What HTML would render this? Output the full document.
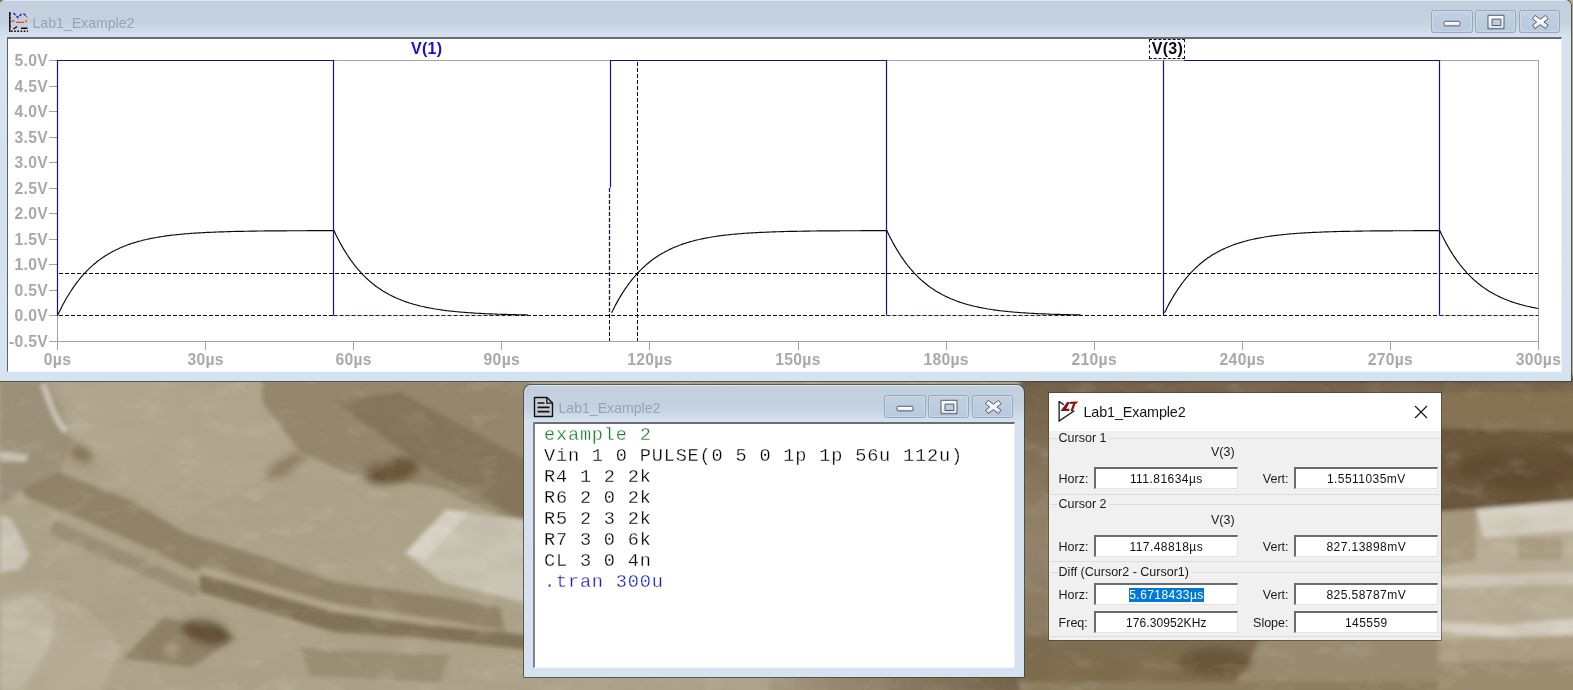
<!DOCTYPE html>
<html><head><meta charset="utf-8"><title>Lab1_Example2</title>
<style>
*{box-sizing:border-box;margin:0;padding:0}
html,body{width:1573px;height:690px;overflow:hidden}
body{position:relative;background:#b5a68a;font-family:"Liberation Sans",sans-serif}
.abs{position:absolute}
.bg{position:absolute;left:0;top:0;width:1573px;height:690px}
.win{position:absolute;border-radius:7px 7px 1px 1px;background:linear-gradient(#dde8f2 0,#dde8f2 1px,#c2cfdd 1.5px,#c4d1df 22px,#d6e2ee 37px,#d5e2ef 100%);box-shadow:0 0 0 1px rgba(60,62,66,.75)}
.win .title{position:absolute;font-size:14.6px;color:#9aa2ab;white-space:nowrap}
.win .content{position:absolute;background:#fff;border-top:2px solid #6e7378;border-left:1px solid #8b9096}
.cb{position:absolute;border:1px solid #96a8bd;border-radius:2.5px;background:linear-gradient(#c1d0e2,#b9cade);box-shadow:inset 0 0 0 1px rgba(255,255,255,.22)}
.cb svg{position:absolute;left:0;top:0}
.plot{position:absolute;left:0;top:0}
.yl{position:absolute;left:0;width:48px;text-align:right;font-weight:bold;letter-spacing:.3px;font-size:15.7px;line-height:20px;color:#a9a9a9;white-space:nowrap}
.xl{position:absolute;top:350px;width:80px;text-align:center;font-weight:bold;letter-spacing:.3px;font-size:15.7px;line-height:20px;color:#a9a9a9;white-space:nowrap}
.tl{position:absolute;font-weight:bold;letter-spacing:.25px;font-size:16px;line-height:20px;white-space:nowrap}
.net{position:absolute;left:544px;top:425.3px;font-family:"Liberation Mono",monospace;font-size:18.6px;letter-spacing:.81px;line-height:21px;color:#000;white-space:pre;-webkit-text-stroke:.3px #fff}
.dlg{position:absolute;left:1048px;top:392px;width:1393.5px;height:248px;background:#f0f0f0;box-shadow:0 0 0 1px rgba(70,60,45,.6)}
.dlg .tb{position:absolute;left:0;top:0;width:100%;height:38px;background:#fff}
.dlg .lbl{position:absolute;font-size:12.5px;line-height:18px;color:#1a1a1a;white-space:nowrap}
.dlg .inp{position:absolute;width:144px;height:22px;background:#fff;border:1px solid #e3e3e3;border-top:2px solid #6b6b6b;border-left:2px solid #6b6b6b;font-size:12px;letter-spacing:.45px;line-height:20.6px;text-align:center;color:#111;white-space:nowrap}
.dlg .gl{position:absolute;left:0;width:100%;height:1px;background:#dcdcdc}
.sel{background:#0078d7;color:#fff;padding:0;margin-right:-.45px}
</style></head><body>
<svg class="bg" width="1573" height="690" viewBox="0 0 1573 690"><defs><filter id="b2" x="-5%" y="-5%" width="110%" height="110%"><feGaussianBlur stdDeviation="2"/></filter><filter id="b5" x="-20%" y="-20%" width="140%" height="140%"><feGaussianBlur stdDeviation="4.5"/></filter><filter id="nz" x="0" y="0" width="100%" height="100%"><feTurbulence type="fractalNoise" baseFrequency="0.018 0.035" numOctaves="4" seed="7" result="t"/><feColorMatrix in="t" type="matrix" values="0 0 0 0 0.33  0 0 0 0 0.27  0 0 0 0 0.17  1.9 0 0 0 -0.78"/></filter><filter id="nw" x="0" y="0" width="100%" height="100%"><feTurbulence type="fractalNoise" baseFrequency="0.03 0.05" numOctaves="4" seed="23" result="t"/><feColorMatrix in="t" type="matrix" values="0 0 0 0 0.88  0 0 0 0 0.86  0 0 0 0 0.8  0 2.4 0 0 -1.32"/></filter><linearGradient id="gB" x1="0" y1="0" x2="1" y2="0"><stop offset="0" stop-color="#a5997f"/><stop offset=".45" stop-color="#8c7d62"/><stop offset="1" stop-color="#705f45"/></linearGradient><linearGradient id="gR" x1="0" y1="0" x2="0" y2="1"><stop offset="0" stop-color="#725f45"/><stop offset=".5" stop-color="#92836a"/><stop offset="1" stop-color="#82725a"/></linearGradient></defs><rect x="0" y="370" width="1573" height="320" fill="#ada38b"/><g filter="url(#b2)"><path d="M0 380H48L72 440L60 472L0 505Z" fill="#9c9079"/><path d="M60 380H300L290 465L180 520L120 482L75 440Z" fill="#b1a78f"/><path d="M262 380H530V530L440 488L350 474L300 452L262 402Z" fill="#94876d"/><path d="M334 402L400 392L530 462V524L430 470Z" fill="#84755b"/><path d="M405 553L446 510L530 520V604L442 582Z" fill="#c9c3b3"/><path d="M405 553L446 510L470 512L425 560Z" fill="#d8d3c6"/><path d="M23 489L58 472L130 500L186 533L260 556L334 582L450 598L500 608L505 632L450 621L334 604L260 588L197 572L139 544L70 514L23 496Z" fill="#918368"/><path d="M200 566L334 604L420 618L530 635V640L420 625L334 612L200 574Z" fill="#b0a58c"/><path d="M200 574L334 612L420 624L530 635V650L420 638L334 632L200 592Z" fill="#827256"/><path d="M55 520L200 585L196 598L50 534Z" fill="#9b8f77"/><path d="M164 617L237 637L192 667L123 658Z" fill="#8f8167"/><path d="M0 515L12 520L30 555L20 570L0 572Z" fill="#cec9bb"/><path d="M0 596L40 590L90 610L120 650L100 694H0Z" fill="#b7ad97"/><path d="M0 604L30 596L56 612L48 650L22 690H0Z" fill="#c2baa6"/><path d="M0 452L28 455L26 462L0 461Z" fill="#c9c4b5"/><path d="M300 648L450 655L440 682L310 676Z" fill="#9b8f76"/><path d="M43 384C50 400 52 415 66 432" stroke="#cdc8ba" stroke-width="5.5" fill="none"/></g><g filter="url(#b5)"><ellipse cx="392" cy="471" rx="27" ry="12" transform="rotate(-12 392 471)" fill="#665539"/><ellipse cx="286" cy="466" rx="22" ry="8" transform="rotate(-30 286 466)" fill="#8d7f65"/><ellipse cx="81" cy="454" rx="12" ry="8" transform="rotate(30 81 454)" fill="#857657"/><ellipse cx="206" cy="632" rx="24" ry="11" transform="rotate(12 206 632)" fill="#5d4c33"/><circle cx="172" cy="651" r="7" fill="#a99e85"/></g><g filter="url(#b2)"><rect x="1020" y="376" width="560" height="142" fill="#69553b"/><rect x="1020" y="384" width="30" height="310" fill="url(#gR)"/><rect x="770" y="672" width="262" height="22" fill="url(#gB)"/><path d="M1040 382H1580V396L1040 393Z" fill="#75644a"/><path d="M1438 392H1580V432L1438 428Z" fill="#857253"/><path d="M1020 636H1580V694H1020Z" fill="#7e6c50"/><path d="M1262 636H1580V694H1230Z" fill="#9a8b70"/><path d="M1020 682H1580V694H1020Z" fill="#8d7d60"/><path d="M1438 512L1580 501V664L1438 660Z" fill="#b9ae97"/><path d="M1438 512L1476 509L1476 560L1438 566Z" fill="#a6997f"/><path d="M1476 509L1580 500V530L1484 538Z" fill="#d6d1c3"/><path d="M1518 538H1562V560H1518Z" fill="#aa9e85"/><path d="M1438 576L1580 572V584L1438 587Z" fill="#d0cabb"/><path d="M1438 622L1500 625L1580 618V634L1500 637L1438 631Z" fill="#d5d0c2"/><path d="M1438 640L1580 636V664L1438 662Z" fill="#ab9e84"/><path d="M1438 662L1580 660V694H1438Z" fill="#9c8d71"/></g><g filter="url(#b5)"><ellipse cx="1215" cy="662" rx="36" ry="14" fill="#67563b"/><ellipse cx="1520" cy="470" rx="60" ry="22" fill="#604c31"/></g><rect x="0" y="380" width="1573" height="310" filter="url(#nz)" opacity=".2"/><rect x="0" y="380" width="1573" height="310" filter="url(#nw)" opacity=".16"/></svg>
<!-- main plot window -->
<div class="win" style="left:-1px;top:0;width:1572px;height:381px;border-radius:6px 6px 0 0"></div>
<div class="abs" style="left:7px;top:37px;width:1555px;height:334.5px;background:#fff;border-top:2px solid #696e74;border-left:1px solid #5d6268;border-right:1px solid #e8eef5;border-bottom:1px solid #f2f6fa"></div>
<svg class="abs" style="left:8px;top:11px" width="22" height="22" viewBox="0 0 22 22">
<rect x="2" y="1" width="18" height="20" fill="#c9cdd6" opacity=".75"/>
<path d="M1.8 1v20" stroke="#0a0a0a" stroke-width="1.4"/>
<path d="M1 3h2M1 7h2M1 11h2M1 15h2" stroke="#0a0a0a" stroke-width="1"/>
<path d="M3 20.3h17" stroke="#0a0a0a" stroke-width="1.4" stroke-dasharray="1.6 1.6"/>
<path d="M5.5 2l4.5 4.5 3.5-3.5M15.5 2.5l3.5 3.5" stroke="#1a1ab8" stroke-width="1.3" fill="none" stroke-dasharray="3 1.2"/>
<path d="M3.5 10h3M8 11.3h8M17 11l2-1.5" stroke="#e04a3a" stroke-width="1.3" fill="none"/>
<path d="M5.5 18l3.5-2.5M13 17.3h6.5" stroke="#0a0a30" stroke-width="1.5" fill="none"/>
</svg>
<div class="abs" style="left:32.5px;top:13px;font-size:14.1px;line-height:20px;color:#9ba3ac;white-space:nowrap" id="t1">Lab1_Example2</div>
<div class="cb" style="left:1431.4px;top:10.2px;width:41.2px;height:23.2px"><svg width="41.2" height="23.2" viewBox="0 0 41.2 23.2"><defs><linearGradient id="gg" x1="0" y1="0" x2="0" y2="1"><stop offset="0" stop-color="#fff"/><stop offset=".5" stop-color="#f6f7f9"/><stop offset="1" stop-color="#d9dde5"/></linearGradient></defs><rect x="12" y="10.3" width="16" height="4.6" rx="1" fill="url(#gg)" stroke="#525c6a" stroke-width="1"/></svg></div><div class="cb" style="left:1475.3px;top:10.2px;width:41.2px;height:23.2px"><svg width="41.2" height="23.2" viewBox="0 0 41.2 23.2"><defs><linearGradient id="gg" x1="0" y1="0" x2="0" y2="1"><stop offset="0" stop-color="#fff"/><stop offset=".5" stop-color="#f6f7f9"/><stop offset="1" stop-color="#d9dde5"/></linearGradient></defs><path d="M12 4.3h16v13.5h-16z M16 8.1v6.4h8.9v-6.4z" fill="url(#gg)" fill-rule="evenodd" stroke="#525c6a" stroke-width="1" stroke-linejoin="round"/></svg></div><div class="cb" style="left:1519.2px;top:10.2px;width:41.2px;height:23.2px"><svg width="41.2" height="23.2" viewBox="0 0 41.2 23.2"><defs><linearGradient id="gg" x1="0" y1="0" x2="0" y2="1"><stop offset="0" stop-color="#fff"/><stop offset=".5" stop-color="#f6f7f9"/><stop offset="1" stop-color="#d9dde5"/></linearGradient></defs><polygon points="12.45,7.85 15.08,4.35 20.30,8.27 25.52,4.35 28.15,7.85 23.94,11.00 28.15,14.15 25.52,17.65 20.30,13.73 15.08,17.65 12.45,14.15 16.66,11.00" fill="url(#gg)" stroke="#525c6a" stroke-width="1" stroke-linejoin="round"/></svg></div>
<div class="yl" style="top:332px">-0.5V</div><div class="yl" style="top:306px">0.0V</div><div class="yl" style="top:281px">0.5V</div><div class="yl" style="top:255px">1.0V</div><div class="yl" style="top:230px">1.5V</div><div class="yl" style="top:204px">2.0V</div><div class="yl" style="top:179px">2.5V</div><div class="yl" style="top:153px">3.0V</div><div class="yl" style="top:128px">3.5V</div><div class="yl" style="top:102px">4.0V</div><div class="yl" style="top:77px">4.5V</div><div class="yl" style="top:51px">5.0V</div>
<div class="xl" style="left:17.5px">0µs</div><div class="xl" style="left:165.6px">30µs</div><div class="xl" style="left:313.7px">60µs</div><div class="xl" style="left:461.8px">90µs</div><div class="xl" style="left:609.9px">120µs</div><div class="xl" style="left:758.0px">150µs</div><div class="xl" style="left:906.1px">180µs</div><div class="xl" style="left:1054.2px">210µs</div><div class="xl" style="left:1202.3px">240µs</div><div class="xl" style="left:1350.4px">270µs</div><div class="xl" style="left:1498.5px">300µs</div>
<div class="tl" style="left:411px;top:39.1px;color:#1a10cc">V(1)</div>
<div class="tl" style="left:1151.8px;top:39.1px;color:#0c0c14">V(3)</div>
<div class="abs" style="left:1149px;top:38.5px;width:36px;height:20px;border:1.3px dashed #111"></div>
<svg class="plot" width="1573" height="690" viewBox="0 0 1573 690"><g stroke="#a3a3a3" stroke-width="1" fill="none" shape-rendering="crispEdges"><path d="M57.5 60.5H1538.5V341.5H49M57.5 60.5V349.5"/><path d="M205.6 341.5V349.5"/><path d="M353.7 341.5V349.5"/><path d="M501.8 341.5V349.5"/><path d="M649.9 341.5V349.5"/><path d="M798.0 341.5V349.5"/><path d="M946.1 341.5V349.5"/><path d="M1094.2 341.5V349.5"/><path d="M1242.3 341.5V349.5"/><path d="M1390.4 341.5V349.5"/><path d="M1538.5 341.5V349.5"/><path d="M49 315.5H57.5"/><path d="M49 290.0H57.5"/><path d="M49 264.5H57.5"/><path d="M49 239.0H57.5"/><path d="M49 213.5H57.5"/><path d="M49 188.0H57.5"/><path d="M49 162.5H57.5"/><path d="M49 137.0H57.5"/><path d="M49 111.5H57.5"/><path d="M49 86.0H57.5"/><path d="M49 60.5H57.5"/></g><g stroke="#0c0c0c" stroke-width="1" fill="none" stroke-dasharray="4 2"><path d="M59 273.5H1538"/><path d="M59 315.5H1538"/><path d="M609.5 188V341"/><path d="M637.5 62V341"/></g><g stroke="#12128f" stroke-width="1.2" fill="none"><path d="M57.5 315.5V60.5H333.5V315.5"/><path d="M610.5 187.5V60.5H886.5V315.5"/><path d="M1163.5 315.5V60.5M1184 60.5H1439.5V315.5"/></g><path d="M333.5 315.5H514.1" stroke="#f4f49a" stroke-width="1.3"/><path d="M333.5 315.5H514.1" stroke="#12128f" stroke-width="1.2" stroke-dasharray="4 2"/><path d="M886.5 315.5H1067.0" stroke="#f4f49a" stroke-width="1.3"/><path d="M886.5 315.5H1067.0" stroke="#12128f" stroke-width="1.2" stroke-dasharray="4 2"/><path d="M1439.5 315.5H1538.5" stroke="#f4f49a" stroke-width="1.3"/><path d="M1439.5 315.5H1538.5" stroke="#12128f" stroke-width="1.2" stroke-dasharray="4 2"/><path d="M609.5 188V315" stroke="#f4f49a" stroke-width="1.3"/><path d="M609.5 188V315" stroke="#15156a" stroke-width="1.3" stroke-dasharray="4 2"/><path d="M57.5 315.5L58.7 312.9L60.0 310.4L61.2 307.9L62.4 305.5L63.7 303.2L64.9 301.0L66.1 298.8L67.4 296.7L68.6 294.7L69.8 292.7L71.1 290.8L72.3 288.9L73.5 287.1L74.8 285.4L76.0 283.7L77.2 282.1L78.5 280.5L79.7 278.9L80.9 277.4L82.2 276.0L83.4 274.6L84.7 273.2L85.9 271.9L87.1 270.7L88.4 269.4L89.6 268.2L90.8 267.1L92.1 265.9L93.3 264.8L94.5 263.8L95.8 262.8L97.0 261.8L98.2 260.8L99.5 259.9L100.7 259.0L101.9 258.1L103.2 257.2L104.4 256.4L105.6 255.6L106.9 254.9L108.1 254.1L109.3 253.4L110.6 252.7L111.8 252.0L113.0 251.3L114.3 250.7L115.5 250.1L116.7 249.5L118.0 248.9L119.2 248.3L120.4 247.8L121.7 247.2L122.9 246.7L124.1 246.2L125.4 245.7L126.6 245.3L127.8 244.8L129.1 244.4L130.3 243.9L131.6 243.5L132.8 243.1L134.0 242.7L135.3 242.4L136.5 242.0L137.7 241.6L139.0 241.3L140.2 241.0L141.4 240.7L142.7 240.3L143.9 240.0L145.1 239.7L146.4 239.5L147.6 239.2L148.8 238.9L150.1 238.7L151.3 238.4L152.5 238.2L153.8 237.9L155.0 237.7L156.2 237.5L157.5 237.3L158.7 237.1L159.9 236.9L161.2 236.7L162.4 236.5L163.6 236.3L164.9 236.1L166.1 235.9L167.3 235.8L168.6 235.6L169.8 235.4L171.0 235.3L172.3 235.1L173.5 235.0L174.7 234.9L176.0 234.7L177.2 234.6L178.4 234.5L179.7 234.4L180.9 234.2L182.2 234.1L183.4 234.0L184.6 233.9L185.9 233.8L187.1 233.7L188.3 233.6L189.6 233.5L190.8 233.4L192.0 233.3L193.3 233.2L194.5 233.1L195.7 233.1L197.0 233.0L198.2 232.9L199.4 232.8L200.7 232.8L201.9 232.7L203.1 232.6L204.4 232.6L205.6 232.5L206.8 232.4L208.1 232.4L209.3 232.3L210.5 232.3L211.8 232.2L213.0 232.2L214.2 232.1L215.5 232.1L216.7 232.0L217.9 232.0L219.2 231.9L220.4 231.9L221.6 231.8L222.9 231.8L224.1 231.8L225.3 231.7L226.6 231.7L227.8 231.6L229.0 231.6L230.3 231.6L231.5 231.5L232.8 231.5L234.0 231.5L235.2 231.4L236.5 231.4L237.7 231.4L238.9 231.4L240.2 231.3L241.4 231.3L242.6 231.3L243.9 231.3L245.1 231.2L246.3 231.2L247.6 231.2L248.8 231.2L250.0 231.1L251.3 231.1L252.5 231.1L253.7 231.1L255.0 231.1L256.2 231.1L257.4 231.0L258.7 231.0L259.9 231.0L261.1 231.0L262.4 231.0L263.6 231.0L264.8 230.9L266.1 230.9L267.3 230.9L268.5 230.9L269.8 230.9L271.0 230.9L272.2 230.9L273.5 230.9L274.7 230.8L275.9 230.8L277.2 230.8L278.4 230.8L279.6 230.8L280.9 230.8L282.1 230.8L283.4 230.8L284.6 230.8L285.8 230.8L287.1 230.8L288.3 230.7L289.5 230.7L290.8 230.7L292.0 230.7L293.2 230.7L294.5 230.7L295.7 230.7L296.9 230.7L298.2 230.7L299.4 230.7L300.6 230.7L301.9 230.7L303.1 230.7L304.3 230.7L305.6 230.7L306.8 230.7L308.0 230.6L309.3 230.6L310.5 230.6L311.7 230.6L313.0 230.6L314.2 230.6L315.4 230.6L316.7 230.6L317.9 230.6L319.1 230.6L320.4 230.6L321.6 230.6L322.8 230.6L324.1 230.6L325.3 230.6L326.5 230.6L327.8 230.6L329.0 230.6L330.3 230.6L331.5 230.6L332.7 230.6L334.0 230.6L335.2 233.2L336.4 235.7L337.7 238.2L338.9 240.6L340.1 242.9L341.4 245.1L342.6 247.3L343.8 249.4L345.1 251.4L346.3 253.4L347.5 255.3L348.8 257.1L350.0 258.9L351.2 260.7L352.5 262.4L353.7 264.0L354.9 265.6L356.2 267.1L357.4 268.6L358.6 270.0L359.9 271.4L361.1 272.8L362.3 274.1L363.6 275.4L364.8 276.6L366.0 277.8L367.3 279.0L368.5 280.1L369.7 281.2L371.0 282.2L372.2 283.3L373.4 284.3L374.7 285.2L375.9 286.2L377.1 287.1L378.4 287.9L379.6 288.8L380.9 289.6L382.1 290.4L383.3 291.2L384.6 291.9L385.8 292.6L387.0 293.3L388.3 294.0L389.5 294.7L390.7 295.3L392.0 295.9L393.2 296.6L394.4 297.1L395.7 297.7L396.9 298.2L398.1 298.8L399.4 299.3L400.6 299.8L401.8 300.3L403.1 300.7L404.3 301.2L405.5 301.6L406.8 302.1L408.0 302.5L409.2 302.9L410.5 303.3L411.7 303.6L412.9 304.0L414.2 304.4L415.4 304.7L416.6 305.0L417.9 305.4L419.1 305.7L420.3 306.0L421.6 306.3L422.8 306.5L424.0 306.8L425.3 307.1L426.5 307.4L427.8 307.6L429.0 307.8L430.2 308.1L431.5 308.3L432.7 308.5L433.9 308.7L435.2 309.0L436.4 309.2L437.6 309.3L438.9 309.5L440.1 309.7L441.3 309.9L442.6 310.1L443.8 310.2L445.0 310.4L446.3 310.6L447.5 310.7L448.7 310.9L450.0 311.0L451.2 311.1L452.4 311.3L453.7 311.4L454.9 311.5L456.1 311.7L457.4 311.8L458.6 311.9L459.8 312.0L461.1 312.1L462.3 312.2L463.5 312.3L464.8 312.4L466.0 312.5L467.2 312.6L468.5 312.7L469.7 312.8L470.9 312.9L472.2 312.9L473.4 313.0L474.6 313.1L475.9 313.2L477.1 313.2L478.4 313.3L479.6 313.4L480.8 313.4L482.1 313.5L483.3 313.6L484.5 313.6L485.8 313.7L487.0 313.7L488.2 313.8L489.5 313.8L490.7 313.9L491.9 313.9L493.2 314.0L494.4 314.0L495.6 314.1L496.9 314.1L498.1 314.2L499.3 314.2L500.6 314.3L501.8 314.3L503.0 314.3L504.3 314.4L505.5 314.4L506.7 314.4L508.0 314.5L509.2 314.5L510.4 314.5L511.7 314.6L512.9 314.6L514.1 314.6L515.4 314.6L516.6 314.7L517.8 314.7L519.1 314.7L520.3 314.7L521.5 314.8L522.8 314.8L524.0 314.8L525.2 314.8L526.5 314.9L527.7 314.9M611.6 312.8L612.9 310.3L614.1 307.8L615.3 305.4L616.6 303.1L617.8 300.9L619.0 298.7L620.3 296.6L621.5 294.6L622.7 292.6L624.0 290.7L625.2 288.9L626.5 287.1L627.7 285.3L628.9 283.6L630.2 282.0L631.4 280.4L632.6 278.9L633.9 277.4L635.1 276.0L636.3 274.6L637.6 273.2L638.8 271.9L640.0 270.6L641.3 269.4L642.5 268.2L643.7 267.0L645.0 265.9L646.2 264.8L647.4 263.8L648.7 262.7L649.9 261.7L651.1 260.8L652.4 259.8L653.6 258.9L654.8 258.1L656.1 257.2L657.3 256.4L658.5 255.6L659.8 254.8L661.0 254.1L662.2 253.4L663.5 252.7L664.7 252.0L665.9 251.3L667.2 250.7L668.4 250.1L669.6 249.4L670.9 248.9L672.1 248.3L673.3 247.8L674.6 247.2L675.8 246.7L677.1 246.2L678.3 245.7L679.5 245.3L680.8 244.8L682.0 244.4L683.2 243.9L684.5 243.5L685.7 243.1L686.9 242.7L688.2 242.4L689.4 242.0L690.6 241.6L691.9 241.3L693.1 241.0L694.3 240.6L695.6 240.3L696.8 240.0L698.0 239.7L699.3 239.5L700.5 239.2L701.7 238.9L703.0 238.6L704.2 238.4L705.4 238.2L706.7 237.9L707.9 237.7L709.1 237.5L710.4 237.3L711.6 237.0L712.8 236.8L714.1 236.7L715.3 236.5L716.5 236.3L717.8 236.1L719.0 235.9L720.2 235.8L721.5 235.6L722.7 235.4L723.9 235.3L725.2 235.1L726.4 235.0L727.7 234.9L728.9 234.7L730.1 234.6L731.4 234.5L732.6 234.3L733.8 234.2L735.1 234.1L736.3 234.0L737.5 233.9L738.8 233.8L740.0 233.7L741.2 233.6L742.5 233.5L743.7 233.4L744.9 233.3L746.2 233.2L747.4 233.1L748.6 233.1L749.9 233.0L751.1 232.9L752.3 232.8L753.6 232.8L754.8 232.7L756.0 232.6L757.3 232.6L758.5 232.5L759.7 232.4L761.0 232.4L762.2 232.3L763.4 232.3L764.7 232.2L765.9 232.2L767.1 232.1L768.4 232.1L769.6 232.0L770.8 232.0L772.1 231.9L773.3 231.9L774.6 231.8L775.8 231.8L777.0 231.7L778.3 231.7L779.5 231.7L780.7 231.6L782.0 231.6L783.2 231.6L784.4 231.5L785.7 231.5L786.9 231.5L788.1 231.4L789.4 231.4L790.6 231.4L791.8 231.4L793.1 231.3L794.3 231.3L795.5 231.3L796.8 231.3L798.0 231.2L799.2 231.2L800.5 231.2L801.7 231.2L802.9 231.1L804.2 231.1L805.4 231.1L806.6 231.1L807.9 231.1L809.1 231.1L810.3 231.0L811.6 231.0L812.8 231.0L814.0 231.0L815.3 231.0L816.5 231.0L817.7 230.9L819.0 230.9L820.2 230.9L821.4 230.9L822.7 230.9L823.9 230.9L825.2 230.9L826.4 230.9L827.6 230.8L828.9 230.8L830.1 230.8L831.3 230.8L832.6 230.8L833.8 230.8L835.0 230.8L836.3 230.8L837.5 230.8L838.7 230.8L840.0 230.8L841.2 230.7L842.4 230.7L843.7 230.7L844.9 230.7L846.1 230.7L847.4 230.7L848.6 230.7L849.8 230.7L851.1 230.7L852.3 230.7L853.5 230.7L854.8 230.7L856.0 230.7L857.2 230.7L858.5 230.7L859.7 230.7L860.9 230.6L862.2 230.6L863.4 230.6L864.6 230.6L865.9 230.6L867.1 230.6L868.3 230.6L869.6 230.6L870.8 230.6L872.0 230.6L873.3 230.6L874.5 230.6L875.8 230.6L877.0 230.6L878.2 230.6L879.5 230.6L880.7 230.6L881.9 230.6L883.2 230.6L884.4 230.6L885.6 230.6L886.9 230.6L888.1 233.2L889.3 235.7L890.6 238.2L891.8 240.6L893.0 242.9L894.3 245.1L895.5 247.3L896.7 249.4L898.0 251.4L899.2 253.4L900.4 255.3L901.7 257.1L902.9 258.9L904.1 260.7L905.4 262.4L906.6 264.0L907.8 265.6L909.1 267.1L910.3 268.6L911.5 270.0L912.8 271.4L914.0 272.8L915.2 274.1L916.5 275.4L917.7 276.6L918.9 277.8L920.2 279.0L921.4 280.1L922.7 281.2L923.9 282.2L925.1 283.3L926.4 284.3L927.6 285.2L928.8 286.2L930.1 287.1L931.3 287.9L932.5 288.8L933.8 289.6L935.0 290.4L936.2 291.2L937.5 291.9L938.7 292.6L939.9 293.3L941.2 294.0L942.4 294.7L943.6 295.3L944.9 295.9L946.1 296.6L947.3 297.1L948.6 297.7L949.8 298.2L951.0 298.8L952.3 299.3L953.5 299.8L954.7 300.3L956.0 300.7L957.2 301.2L958.4 301.6L959.7 302.1L960.9 302.5L962.1 302.9L963.4 303.3L964.6 303.6L965.8 304.0L967.1 304.4L968.3 304.7L969.5 305.0L970.8 305.4L972.0 305.7L973.3 306.0L974.5 306.3L975.7 306.5L977.0 306.8L978.2 307.1L979.4 307.4L980.7 307.6L981.9 307.8L983.1 308.1L984.4 308.3L985.6 308.5L986.8 308.7L988.1 309.0L989.3 309.2L990.5 309.3L991.8 309.5L993.0 309.7L994.2 309.9L995.5 310.1L996.7 310.2L997.9 310.4L999.2 310.6L1000.4 310.7L1001.6 310.9L1002.9 311.0L1004.1 311.1L1005.3 311.3L1006.6 311.4L1007.8 311.5L1009.0 311.7L1010.3 311.8L1011.5 311.9L1012.7 312.0L1014.0 312.1L1015.2 312.2L1016.4 312.3L1017.7 312.4L1018.9 312.5L1020.1 312.6L1021.4 312.7L1022.6 312.8L1023.9 312.9L1025.1 312.9L1026.3 313.0L1027.6 313.1L1028.8 313.2L1030.0 313.2L1031.3 313.3L1032.5 313.4L1033.7 313.4L1035.0 313.5L1036.2 313.6L1037.4 313.6L1038.7 313.7L1039.9 313.7L1041.1 313.8L1042.4 313.8L1043.6 313.9L1044.8 313.9L1046.1 314.0L1047.3 314.0L1048.5 314.1L1049.8 314.1L1051.0 314.2L1052.2 314.2L1053.5 314.3L1054.7 314.3L1055.9 314.3L1057.2 314.4L1058.4 314.4L1059.6 314.4L1060.9 314.5L1062.1 314.5L1063.3 314.5L1064.6 314.6L1065.8 314.6L1067.0 314.6L1068.3 314.6L1069.5 314.7L1070.8 314.7L1072.0 314.7L1073.2 314.7L1074.5 314.8L1075.7 314.8L1076.9 314.8L1078.2 314.8L1079.4 314.9L1080.6 314.9M1164.5 312.8L1165.8 310.3L1167.0 307.8L1168.2 305.4L1169.5 303.1L1170.7 300.9L1172.0 298.7L1173.2 296.6L1174.4 294.6L1175.7 292.6L1176.9 290.7L1178.1 288.9L1179.4 287.1L1180.6 285.3L1181.8 283.6L1183.1 282.0L1184.3 280.4L1185.5 278.9L1186.8 277.4L1188.0 276.0L1189.2 274.6L1190.5 273.2L1191.7 271.9L1192.9 270.6L1194.2 269.4L1195.4 268.2L1196.6 267.0L1197.9 265.9L1199.1 264.8L1200.3 263.8L1201.6 262.7L1202.8 261.7L1204.0 260.8L1205.3 259.8L1206.5 258.9L1207.7 258.1L1209.0 257.2L1210.2 256.4L1211.4 255.6L1212.7 254.8L1213.9 254.1L1215.1 253.4L1216.4 252.7L1217.6 252.0L1218.9 251.3L1220.1 250.7L1221.3 250.1L1222.6 249.4L1223.8 248.9L1225.0 248.3L1226.3 247.8L1227.5 247.2L1228.7 246.7L1230.0 246.2L1231.2 245.7L1232.4 245.3L1233.7 244.8L1234.9 244.4L1236.1 243.9L1237.4 243.5L1238.6 243.1L1239.8 242.7L1241.1 242.4L1242.3 242.0L1243.5 241.6L1244.8 241.3L1246.0 241.0L1247.2 240.6L1248.5 240.3L1249.7 240.0L1250.9 239.7L1252.2 239.5L1253.4 239.2L1254.6 238.9L1255.9 238.6L1257.1 238.4L1258.3 238.2L1259.6 237.9L1260.8 237.7L1262.0 237.5L1263.3 237.3L1264.5 237.0L1265.7 236.8L1267.0 236.7L1268.2 236.5L1269.5 236.3L1270.7 236.1L1271.9 235.9L1273.2 235.8L1274.4 235.6L1275.6 235.4L1276.9 235.3L1278.1 235.1L1279.3 235.0L1280.6 234.9L1281.8 234.7L1283.0 234.6L1284.3 234.5L1285.5 234.3L1286.7 234.2L1288.0 234.1L1289.2 234.0L1290.4 233.9L1291.7 233.8L1292.9 233.7L1294.1 233.6L1295.4 233.5L1296.6 233.4L1297.8 233.3L1299.1 233.2L1300.3 233.1L1301.5 233.1L1302.8 233.0L1304.0 232.9L1305.2 232.8L1306.5 232.8L1307.7 232.7L1308.9 232.6L1310.2 232.6L1311.4 232.5L1312.6 232.4L1313.9 232.4L1315.1 232.3L1316.3 232.3L1317.6 232.2L1318.8 232.2L1320.1 232.1L1321.3 232.1L1322.5 232.0L1323.8 232.0L1325.0 231.9L1326.2 231.9L1327.5 231.8L1328.7 231.8L1329.9 231.7L1331.2 231.7L1332.4 231.7L1333.6 231.6L1334.9 231.6L1336.1 231.6L1337.3 231.5L1338.6 231.5L1339.8 231.5L1341.0 231.4L1342.3 231.4L1343.5 231.4L1344.7 231.4L1346.0 231.3L1347.2 231.3L1348.4 231.3L1349.7 231.3L1350.9 231.2L1352.1 231.2L1353.4 231.2L1354.6 231.2L1355.8 231.1L1357.1 231.1L1358.3 231.1L1359.5 231.1L1360.8 231.1L1362.0 231.1L1363.2 231.0L1364.5 231.0L1365.7 231.0L1367.0 231.0L1368.2 231.0L1369.4 231.0L1370.7 230.9L1371.9 230.9L1373.1 230.9L1374.4 230.9L1375.6 230.9L1376.8 230.9L1378.1 230.9L1379.3 230.9L1380.5 230.8L1381.8 230.8L1383.0 230.8L1384.2 230.8L1385.5 230.8L1386.7 230.8L1387.9 230.8L1389.2 230.8L1390.4 230.8L1391.6 230.8L1392.9 230.8L1394.1 230.7L1395.3 230.7L1396.6 230.7L1397.8 230.7L1399.0 230.7L1400.3 230.7L1401.5 230.7L1402.7 230.7L1404.0 230.7L1405.2 230.7L1406.4 230.7L1407.7 230.7L1408.9 230.7L1410.1 230.7L1411.4 230.7L1412.6 230.7L1413.8 230.6L1415.1 230.6L1416.3 230.6L1417.6 230.6L1418.8 230.6L1420.0 230.6L1421.3 230.6L1422.5 230.6L1423.7 230.6L1425.0 230.6L1426.2 230.6L1427.4 230.6L1428.7 230.6L1429.9 230.6L1431.1 230.6L1432.4 230.6L1433.6 230.6L1434.8 230.6L1436.1 230.6L1437.3 230.6L1438.5 230.6L1439.8 230.6L1441.0 233.2L1442.2 235.7L1443.5 238.2L1444.7 240.6L1445.9 242.9L1447.2 245.1L1448.4 247.3L1449.6 249.4L1450.9 251.4L1452.1 253.4L1453.3 255.3L1454.6 257.1L1455.8 258.9L1457.0 260.7L1458.3 262.4L1459.5 264.0L1460.7 265.6L1462.0 267.1L1463.2 268.6L1464.5 270.0L1465.7 271.4L1466.9 272.8L1468.2 274.1L1469.4 275.4L1470.6 276.6L1471.9 277.8L1473.1 279.0L1474.3 280.1L1475.6 281.2L1476.8 282.2L1478.0 283.3L1479.3 284.3L1480.5 285.2L1481.7 286.2L1483.0 287.1L1484.2 287.9L1485.4 288.8L1486.7 289.6L1487.9 290.4L1489.1 291.2L1490.4 291.9L1491.6 292.6L1492.8 293.3L1494.1 294.0L1495.3 294.7L1496.5 295.3L1497.8 295.9L1499.0 296.6L1500.2 297.1L1501.5 297.7L1502.7 298.2L1503.9 298.8L1505.2 299.3L1506.4 299.8L1507.6 300.3L1508.9 300.7L1510.1 301.2L1511.3 301.6L1512.6 302.1L1513.8 302.5L1515.1 302.9L1516.3 303.3L1517.5 303.6L1518.8 304.0L1520.0 304.4L1521.2 304.7L1522.5 305.0L1523.7 305.4L1524.9 305.7L1526.2 306.0L1527.4 306.3L1528.6 306.5L1529.9 306.8L1531.1 307.1L1532.3 307.4L1533.6 307.6L1534.8 307.8L1536.0 308.1L1537.3 308.3L1538.5 308.5" stroke="#0a0a0a" stroke-width="1.15" fill="none" stroke-linejoin="round"/></svg>
<!-- netlist window -->
<div class="win" style="left:524px;top:384.5px;width:499.5px;height:292.5px"></div>
<div class="abs" style="left:532.5px;top:421.5px;width:482.5px;height:246px;background:#fff;border-top:2px solid #6a6f75;border-left:2px solid #7d838a;border-right:1px solid #e8eef5;border-bottom:1px solid #f2f6fa"></div>
<svg class="abs" style="left:533px;top:396px" width="22" height="22" viewBox="0 0 22 22">
<path d="M1.5 1.5h12.5l5.5 5.5v13.5h-18z" fill="#c8ccd2" stroke="#111" stroke-width="1.4" stroke-linejoin="round"/>
<path d="M13.8 1.5v5.7h5.7" fill="none" stroke="#111" stroke-width="1.3"/>
<path d="M4.5 7h7M4.5 11.3h12M4.5 15.6h12" stroke="#111" stroke-width="1.7"/>
</svg>
<div class="abs" style="left:558.5px;top:397.9px;font-size:14.1px;line-height:20px;color:#9ba3ac;white-space:nowrap" id="t2">Lab1_Example2</div>
<div class="cb" style="left:884.4px;top:395.2px;width:41.2px;height:23.2px"><svg width="41.2" height="23.2" viewBox="0 0 41.2 23.2"><defs><linearGradient id="gg" x1="0" y1="0" x2="0" y2="1"><stop offset="0" stop-color="#fff"/><stop offset=".5" stop-color="#f6f7f9"/><stop offset="1" stop-color="#d9dde5"/></linearGradient></defs><rect x="12" y="10.3" width="16" height="4.6" rx="1" fill="url(#gg)" stroke="#525c6a" stroke-width="1"/></svg></div><div class="cb" style="left:928.3px;top:395.2px;width:41.2px;height:23.2px"><svg width="41.2" height="23.2" viewBox="0 0 41.2 23.2"><defs><linearGradient id="gg" x1="0" y1="0" x2="0" y2="1"><stop offset="0" stop-color="#fff"/><stop offset=".5" stop-color="#f6f7f9"/><stop offset="1" stop-color="#d9dde5"/></linearGradient></defs><path d="M12 4.3h16v13.5h-16z M16 8.1v6.4h8.9v-6.4z" fill="url(#gg)" fill-rule="evenodd" stroke="#525c6a" stroke-width="1" stroke-linejoin="round"/></svg></div><div class="cb" style="left:972.2px;top:395.2px;width:41.2px;height:23.2px"><svg width="41.2" height="23.2" viewBox="0 0 41.2 23.2"><defs><linearGradient id="gg" x1="0" y1="0" x2="0" y2="1"><stop offset="0" stop-color="#fff"/><stop offset=".5" stop-color="#f6f7f9"/><stop offset="1" stop-color="#d9dde5"/></linearGradient></defs><polygon points="12.45,7.85 15.08,4.35 20.30,8.27 25.52,4.35 28.15,7.85 23.94,11.00 28.15,14.15 25.52,17.65 20.30,13.73 15.08,17.65 12.45,14.15 16.66,11.00" fill="url(#gg)" stroke="#525c6a" stroke-width="1" stroke-linejoin="round"/></svg></div>
<div class="net"><span style="color:#1f8230">example 2</span>
Vin 1 0 PULSE(0 5 0 1p 1p 56u 112u)
R4 1 2 2k
R6 2 0 2k
R5 2 3 2k
R7 3 0 6k
CL 3 0 4n
<span style="color:#1c1cd0">.tran 300u</span></div>
<div class="dlg" style="left:1048.5px;top:392.5px;width:392.5px;height:247px"><div class="tb"></div><svg class="abs" style="left:9px;top:8px" width="22" height="22" viewBox="0 0 22 22"><path d="M5.8 3.8L1.1 0.5V20L16.4 9.8" fill="none" stroke="#111" stroke-width="1.25" stroke-linejoin="miter"/><path d="M9.2 1H12L8.2 7.8H11.6L11 10H2.5Z" fill="#8b1212"/><path d="M12.3 .8L20.3 .5L18.3 2.8H17.4L14.8 10.3H12.4L15 2.8H11.5Z" fill="#8b1212"/></svg><div class="abs" id="dt" style="left:35px;top:9px;font-size:14.4px;letter-spacing:-.15px;line-height:20px;color:#151515;white-space:nowrap">Lab1_Example2</div><svg class="abs" style="left:365px;top:12px" width="14" height="14" viewBox="0 0 14 14"><path d="M1 1l12 12M13 1l-12 12" stroke="#111" stroke-width="1.1"/></svg><div class="gl" style="top:45.7px;left:1px;width:7px"></div><div class="gl" style="top:45.7px;left:60.0px;width:331.0px"></div><div class="gl" style="top:111.9px;left:1px;width:7px"></div><div class="gl" style="top:111.9px;left:61.0px;width:330.0px"></div><div class="gl" style="top:179.7px;left:1px;width:7px"></div><div class="gl" style="top:179.7px;left:143.5px;width:247.5px"></div><div class="gl" style="top:101.7px;left:1px;width:390.5px"></div><div class="gl" style="top:168.0px;left:1px;width:390.5px"></div><div class="gl" style="top:243.0px;left:1px;width:390.5px"></div><div class="lbl" style="left:10.1px;top:36.9px">Cursor 1</div><div class="lbl" style="left:10.1px;top:102.5px">Cursor 2</div><div class="lbl" style="left:10.1px;top:170.7px">Diff (Cursor2 - Cursor1)</div><div class="lbl" style="left:162.5px;top:50.6px">V(3)</div><div class="lbl" style="left:162.5px;top:118.9px">V(3)</div><div class="lbl" style="left:10.1px;top:77.3px">Horz:</div><div class="inp" style="left:45.3px;top:74.7px">111.81634µs</div><div class="lbl" style="right:152.5px;top:77.3px">Vert:</div><div class="inp" style="left:245.3px;top:74.7px">1.5511035mV</div><div class="lbl" style="left:10.1px;top:145.5px">Horz:</div><div class="inp" style="left:45.3px;top:142.5px">117.48818µs</div><div class="lbl" style="right:152.5px;top:145.5px">Vert:</div><div class="inp" style="left:245.3px;top:142.5px">827.13898mV</div><div class="lbl" style="left:10.1px;top:193.4px">Horz:</div><div class="inp" style="left:45.3px;top:190.9px"><span class="sel">5.6718433µs</span></div><div class="lbl" style="right:152.5px;top:193.4px">Vert:</div><div class="inp" style="left:245.3px;top:190.9px">825.58787mV</div><div class="lbl" style="left:10.1px;top:221.8px">Freq:</div><div class="inp" style="left:45.3px;top:218.7px"><span style="letter-spacing:.1px">176.30952KHz</span></div><div class="lbl" style="right:152.5px;top:221.8px">Slope:</div><div class="inp" style="left:245.3px;top:218.7px">145559</div></div>
</body></html>
